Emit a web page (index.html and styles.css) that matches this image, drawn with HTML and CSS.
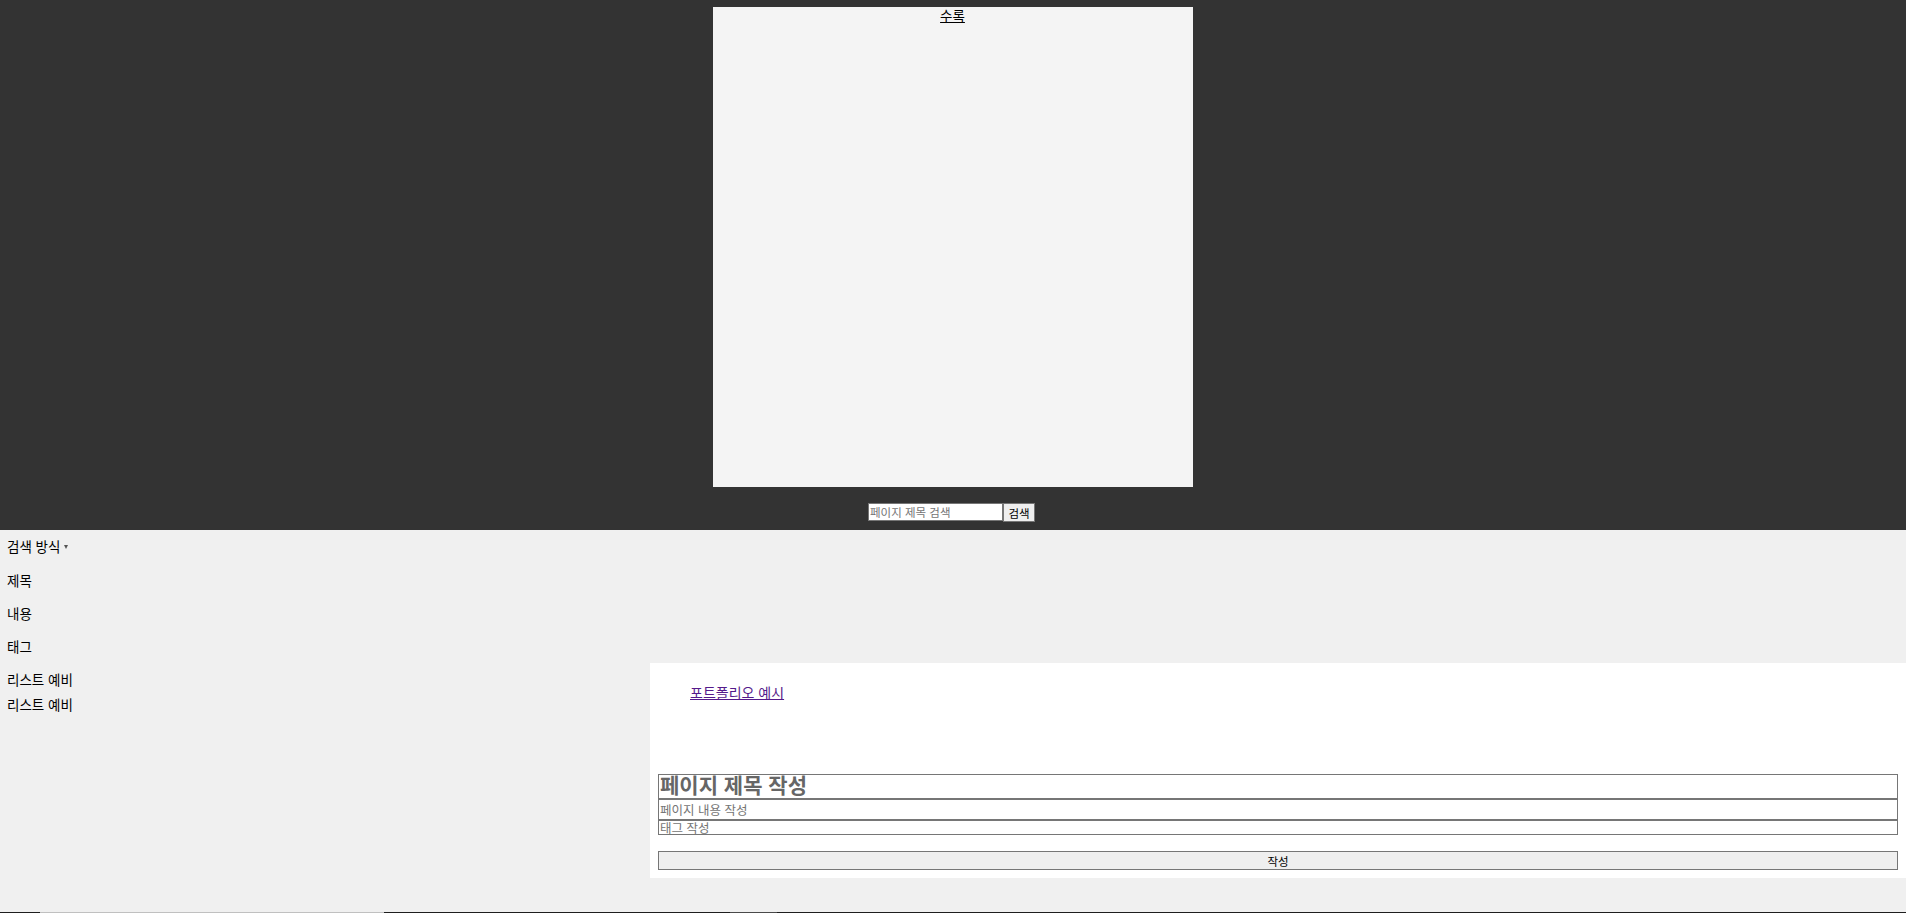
FILE: index.html
```html
<!DOCTYPE html>
<html lang="ko">
<head>
<meta charset="utf-8">
<title>수록</title>
<link rel="stylesheet" href="styles.css">
</head>
<body>
<header class="top">
  <section class="panel">
    <a class="panel-title" href="#">수록</a>
  </section>
  <form class="search">
    <input class="search-input" type="text" placeholder="페이지 제목 검색">
    <button class="search-btn" type="button">검색</button>
  </form>
</header>
<div class="main">
  <aside class="sidebar">
    <div class="method">검색 방식<span class="caret"></span></div>
    <ul class="options">
      <li>제목</li>
      <li>내용</li>
      <li class="tag-item">태그</li>
      <li class="spare">리스트 예비</li>
      <li class="spare">리스트 예비</li>
    </ul>
  </aside>
  <section class="content">
    <div class="card">
      <nav class="links"><a class="visited" href="#">포트폴리오 예시</a></nav>
      <form class="write">
        <input class="f-title" type="text" placeholder="페이지 제목 작성">
        <input class="f-body" type="text" placeholder="페이지 내용 작성">
        <input class="f-tag" type="text" placeholder="태그 작성">
        <button class="f-submit" type="button">작성</button>
      </form>
    </div>
  </section>
</div>
<div class="next-strip"></div>
</body>
</html>
```

FILE: styles.css
```css
html, body {
  margin: 0;
  padding: 0;
}
body {
  background: #f0f0f0;
  font-family: "Noto Sans CJK KR", "Noto Sans", sans-serif;
  font-size: 13.5px;
  line-height: 16px;
  color: #000;
  height: 913px;
  overflow: hidden;
  display: flex;
  flex-direction: column;
}
.top {
  background: #333333;
  height: 530px;
  display: flex;
  flex-direction: column;
  align-items: center;
  flex: none;
}
.panel {
  margin-top: 7px;
  width: 480px;
  height: 480px;
  background: #f4f4f4;
  display: flex;
  justify-content: center;
  margin-left: -1px;
}
.panel-title {
  color: #000;
  text-decoration: underline;
  font-size: 13.5px;
  line-height: 16px;
  margin-top: 0;
  height: 16px;
}
.search {
  display: flex;
  margin-top: 16px;
  margin-left: -3px;
}
.search-input {
  box-sizing: border-box;
  width: 135px;
  height: 18px;
  border: 1px solid #767676;
  padding: 0 1px;
  margin: 0;
  font-family: inherit;
  font-size: 11.5px;
  line-height: 14px;
  background: #fff;
  outline: none;
}
.search-input::placeholder { color: #757575; }
.search-btn {
  box-sizing: border-box;
  width: 32px;
  height: 19px;
  border: 1px solid #767676;
  background: #efefef;
  padding: 0;
  margin: 0;
  font-family: inherit;
  font-size: 11.5px;
  font-weight: normal;
  line-height: 14px;
  color: #000;
}
.main {
  display: flex;
  flex: none;
  height: 382px;
}
.sidebar {
  width: 650px;
  flex: none;
  padding: 8px 0 0 7px;
  box-sizing: border-box;
}
.method {
  display: flex;
  align-items: center;
  height: 16px;
}
.caret {
  display: inline-block;
  width: 0;
  height: 0;
  margin-left: 4px;
  margin-top: 2px;
  border-left: 2.5px solid transparent;
  border-right: 2.5px solid transparent;
  border-top: 4px solid #555;
}
.options {
  list-style: none;
  margin: 18px 0 0 0;
  padding: 0;
  display: flex;
  flex-direction: column;
  gap: 17px;
}
.options li { height: 16px; }
.options .spare + .spare { margin-top: -8px; }
.content {
  flex: 1;
  padding-top: 133px;
}
.card {
  background: #fff;
  padding: 8px;
  height: 215px;
  box-sizing: border-box;
}
.links {
  padding: 13px 0 0 32px;
  height: 103px;
  box-sizing: border-box;
  font-size: 14px;
}
.visited {
  color: #551a8b;
  text-decoration: underline;
}
.write {
  display: flex;
  flex-direction: column;
}
.write input {
  box-sizing: border-box;
  width: 100%;
  margin: 0;
  border: 1px solid #767676;
  padding: 0 1px;
  font-family: inherit;
  background: #fff;
  outline: none;
  color: #000;
}
.write input::placeholder { color: #757575; }
.f-title {
  height: 25px;
  font-size: 21px;
  font-weight: bold;
  line-height: 21px;
  padding-bottom: 5px !important;
}
.f-title::placeholder { color: #666 !important; }
.f-body {
  height: 21px;
  font-size: 12.5px;
  line-height: 19px;
}
.f-tag {
  height: 15px;
  font-size: 12.5px;
  line-height: 13px;
}
.f-submit {
  box-sizing: border-box;
  margin-top: 16px;
  width: 100%;
  height: 19px;
  border: 1px solid #767676;
  background: #efefef;
  font-family: inherit;
  font-size: 11.5px;
  line-height: 14px;
  padding: 0;
  color: #000;
}
.next-strip {
  margin-top: auto;
  height: 1px;
  flex: none;
  background: linear-gradient(to right, #1e1e1e 0 40px, #c0c0c0 40px 384px, #1e1e1e 384px 730px, #4a4a4a 730px 777px, #1e1e1e 777px);
}
```
